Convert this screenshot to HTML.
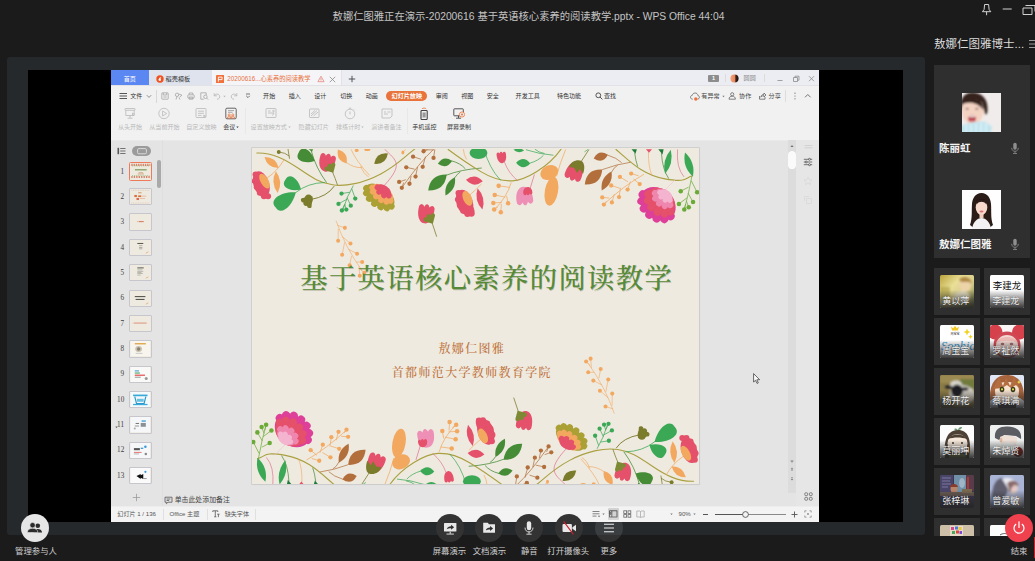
<!DOCTYPE html>
<html lang="zh-CN">
<head>
<meta charset="utf-8">
<title>会议演示</title>
<style>
*{box-sizing:border-box;margin:0;padding:0}
html,body{width:1035px;height:561px;overflow:hidden;background:#1b1b1b}
body{position:relative;font-family:"Liberation Sans","Noto Sans CJK SC",sans-serif;color:#ccc;font-size:12px}
.abs{position:absolute}
#title{position:absolute;left:0;top:9px;width:1057px;text-align:center;font-size:10.3px;line-height:16px;color:#c4c4c4;white-space:nowrap}
#panel{position:absolute;left:7px;top:57px;width:918px;height:478.300px;background:#25292c;border-radius:3px}
#black{position:absolute;left:28px;top:70px;width:875px;height:452px;background:#000}
#wps{position:absolute;left:111.300px;top:70.200px;width:708.200px;height:452px;background:#e4e4e4;overflow:hidden;color:#333}
#wps .t{position:absolute;white-space:nowrap;font-size:7px;line-height:10px;color:#3a3a3a}
#tabbar{position:absolute;left:0;top:0;width:709px;height:16px;background:#ececf1}
#menubar{position:absolute;left:0;top:16px;width:709px;height:19px;background:#f1f1f1;border-top:1px solid #dcdcdc}
#ribbon{position:absolute;left:0;top:35px;width:709px;height:35px;background:#f1f1f1}
#thumbs{position:absolute;left:0;top:70px;width:51px;height:367px;background:#e4e4e4;border-right:1px solid #dedede}
#status{position:absolute;left:0;top:437px;width:709px;height:15px;background:#f3f3f3}
#slide{position:absolute;left:140.300px;top:78.200px;width:447px;height:336px;background:#eeeae0;box-shadow:0 0 0 .8px #cbcbcb,1.200px 1.200px 1.500px rgba(0,0,0,.2);overflow:hidden}
.stitle{position:absolute;left:48.600px;top:112.300px;font-family:"Liberation Serif","Noto Serif CJK SC",serif;font-weight:500;font-size:27.400px;line-height:36px;letter-spacing:1.300px;color:#568a36;white-space:nowrap;text-shadow:.5px .5px .6px rgba(60,70,40,.3)}
.ssub{position:absolute;left:0;width:440.500px;text-align:center;font-family:"Liberation Serif","Noto Serif CJK SC",serif;font-weight:500;font-size:12px;line-height:16px;letter-spacing:1.350px;color:#bf733c;white-space:nowrap}
#side{position:absolute;left:934px;top:65.300px;width:101px;height:470.300px;overflow:hidden}
.bigcard{position:absolute;left:0;top:0;width:96px;height:193px;background:#2f2f2f}
.bigcard .bav{position:absolute;left:28px;margin-top:-1px;width:39px;height:39px;overflow:hidden;background:#fff}
.bigcard .bnm{position:absolute;left:5px;font-size:10.500px;line-height:14px;font-weight:bold;color:#f4f4f4;white-space:nowrap}
.bigcard .mic{position:absolute;left:76px;width:10px;height:13px}
.card{position:absolute;width:46px;height:46.400px;background:#2f2f2f}
.card .av{position:absolute;left:6.300px;top:6.800px;width:33.400px;height:32.800px;border-radius:1.500px;overflow:hidden;background:#3a3a3a}
.card .av svg{position:absolute;left:0;top:0}
.card .nm{position:absolute;left:-1.200px;bottom:.5px;width:100%;height:17px;padding-top:5px;text-align:center;font-size:9.100px;line-height:12px;color:#f2f2f2;white-space:nowrap;text-shadow:0 0 1px rgba(0,0,0,.6)}
.card .sh{position:absolute;left:0;bottom:0;width:100%;height:18px;background:linear-gradient(rgba(40,40,40,0),rgba(40,40,40,.5) 50%,rgba(36,36,36,.9))}
.btn{position:absolute;top:514.300px;width:28px;height:28px;border-radius:50%;background:#333}
.btn svg{position:absolute;left:0;top:0}
.lbl{position:absolute;top:545px;width:60px;font-size:8.4px;line-height:12px;color:#cfcfcf;white-space:nowrap;text-align:center}
</style>
</head>
<body>
<div id="title">敖娜仁图雅正在演示-20200616 基于英语核心素养的阅读教学.pptx - WPS Office 44:04</div>
<div id="panel"></div>
<div id="black"></div>
<div id="wps">
<div class="abs" style="left:0px;top:0px;width:709px;height:15.6px;background:#ecedf2;"></div>
<div class="abs" style="left:0px;top:0px;width:38px;height:15.6px;background:#5b87f2;"></div>
<div class="t" style="left:12.4px;top:3.7px;font-size:6.1px;color:#fff;">首页</div>
<div class="abs" style="left:38px;top:0px;width:62.3px;height:15.6px;background:#dfe3ee;"></div>
<svg class="abs" style="left:44.8px;top:4.9px" width="8" height="8" viewBox="0 0 8 8"><circle cx="4" cy="4" r="3.700" fill="#f2501e"/><path d="M2.500 4.800c.2-1.800 1.600-2.600 3-2.800-.9.800-1.200 1.500-.6 2.500.4.700-.2 1.500-1 1.500-.8 0-1.500-.5-1.400-1.200z" fill="#fff"/></svg>
<div class="t" style="left:54.3px;top:3.7px;font-size:6.15px;color:#333;">稻壳模板</div>
<div class="abs" style="left:100.3px;top:0px;width:129px;height:15.6px;background:#f5f5f8;"></div>
<div class="abs" style="left:229.3px;top:0px;width:0.6px;height:15.6px;background:#e2e2e8;"></div>
<svg class="abs" style="left:104.5px;top:4.5px" width="8.5" height="8.5" viewBox="0 0 8.5 8.5"><rect width="8.500" height="8.500" rx="1" fill="#f2703c"/><path d="M2.400 6.700v-4.600h3.700v2.500h-3.700" fill="none" stroke="#fff" stroke-width=".9"/></svg>
<div class="t" style="left:116px;top:3.7px;font-size:6.28px;color:#e8703a;">20200616...心素养的阅读教学</div>
<svg class="abs" style="left:206px;top:5.2px" width="8" height="8" viewBox="0 0 8 8"><path d="M4 1.200l3.100 5.500h-6.200z" fill="none" stroke="#e47a6c" stroke-width=".7" stroke-linejoin="round"/><path d="M4 3.100v2M4 5.600v.5" stroke="#e47a6c" stroke-width=".7"/></svg>
<svg class="abs" style="left:217.5px;top:5.5px" width="7" height="7" viewBox="0 0 7 7"><path d="M.8.800l5.400 5.400M6.200.8l-5.400 5.400" stroke="#8a8a8a" stroke-width=".8"/></svg>
<svg class="abs" style="left:237px;top:5px" width="8" height="8" viewBox="0 0 8 8"><path d="M4 .8v6.400M.8 4h6.400" stroke="#444" stroke-width=".9"/></svg>
<div class="abs" style="left:597px;top:4.5px;width:10.5px;height:7.4px;background:#8d8d8d;border-radius:1px"></div>
<div class="t" style="left:600.6px;top:3.2px;font-size:5.5px;color:#fff;font-weight:bold">1</div>
<div class="abs" style="left:613.7px;top:4px;width:0.7px;height:8px;background:#dcdce0;"></div>
<svg class="abs" style="left:618.3px;top:3.4px" width="9" height="9" viewBox="0 0 9 9"><defs><linearGradient id="ua" x1="0" y1="0" x2="1" y2="0"><stop offset="0" stop-color="#f2a27c"/><stop offset=".5" stop-color="#e8895e"/><stop offset=".68" stop-color="#3a2019"/><stop offset="1" stop-color="#1c1210"/></linearGradient></defs><circle cx="4.500" cy="4.500" r="4.100" fill="url(#ua)"/></svg>
<div class="t" style="left:632.3px;top:3px;font-size:6.1px;color:#8a8a8a;">圆圆</div>
<div class="abs" style="left:652.3px;top:4px;width:0.7px;height:8px;background:#dcdce0;"></div>
<svg class="abs" style="left:664px;top:3.5px" width="50" height="10" viewBox="0 0 50 10"><g fill="none" stroke="#8a8a8a" stroke-width=".8"><path d="M2.500 6.500h5"/><path d="M18.500 3.500h4v4h-4zM20 3.500v-1.300h4v4h-1.500"/><path d="M34 2.200l5 5M39 2.200l-5 5"/></g></svg>
<div class="abs" style="left:0px;top:15.6px;width:709px;height:54.4px;background:#f1f1f1;"></div>
<div class="abs" style="left:0px;top:15.3px;width:709px;height:0.7px;background:#e2e2e6;"></div>
<svg class="abs" style="left:8px;top:22px" width="9" height="8" viewBox="0 0 9 8"><g fill="#444"><rect x=".5" y="1" width="7.500" height=".9"/><rect x=".5" y="3.550" width="7.500" height=".9"/><rect x=".5" y="6.100" width="7.500" height=".9"/></g></svg>
<div class="t" style="left:19px;top:21px;font-size:6px;color:#333;">文件</div>
<svg class="abs" style="left:35px;top:23.5px" width="6" height="5" viewBox="0 0 6 5"><path d="M.8 1.200l2.200 2.200 2.200-2.200" fill="none" stroke="#777" stroke-width=".8"/></svg>
<div class="abs" style="left:44.7px;top:19.5px;width:0.8px;height:13px;background:#d8d8d8;"></div>
<svg class="abs" style="left:49.5px;top:22px" width="8" height="8" viewBox="0 0 8 8"><g fill="none" stroke="#a4a4a4" stroke-width=".8"><rect x=".8" y=".8" width="6.400" height="6.400" rx=".6"/><path d="M2.300 1v2h3.400v-2M2.300 5h3.400"/></g></svg>
<svg class="abs" style="left:62.5px;top:22px" width="9" height="8" viewBox="0 0 9 8"><g fill="none" stroke="#a4a4a4" stroke-width=".8"><circle cx="3" cy="2.800" r="1.700"/><path d="M4.500 2l3.500 1.200-2.500 2M3 4.500l-1 3M5 5.500l1 2"/></g></svg>
<svg class="abs" style="left:76px;top:22px" width="8" height="8" viewBox="0 0 8 8"><g fill="none" stroke="#a4a4a4" stroke-width=".8"><rect x=".8" y="2.800" width="6.400" height="3.400" rx=".8"/><path d="M2.200 2.800v-1.800h3.600v1.800M2.200 5h3.600v2.200h-3.600z"/></g></svg>
<svg class="abs" style="left:89px;top:22px" width="9" height="8" viewBox="0 0 9 8"><g fill="none" stroke="#a4a4a4" stroke-width=".8"><path d="M6.200 3v-2.200h-5.400v6.400h3"/><circle cx="5.400" cy="4.800" r="1.700"/><path d="M6.600 6l1.600 1.600"/></g></svg>
<svg class="abs" style="left:102px;top:22px" width="8" height="8" viewBox="0 0 8 8"><g fill="none" stroke="#b5b5b5" stroke-width=".8"><path d="M1.200 1.200v2.600h2.600"/><path d="M1.500 3.600c1-1.800 3.800-2.200 5 0 .9 1.800-.5 3.600-2.500 3.600"/></g></svg>
<svg class="abs" style="left:111.5px;top:25px" width="3" height="3" viewBox="0 0 3 3"><path d="M.3.800h2.400l-1.200 1.400z" fill="#b5b5b5"/></svg>
<svg class="abs" style="left:119px;top:22px" width="8" height="8" viewBox="0 0 8 8"><g fill="none" stroke="#b5b5b5" stroke-width=".8"><path d="M6.800 1.200v2.600h-2.600"/><path d="M6.500 3.600c-1-1.800-3.800-2.200-5 0-.9 1.800.5 3.600 2.500 3.600"/></g></svg>
<svg class="abs" style="left:134px;top:23px" width="6" height="6" viewBox="0 0 6 6"><path d="M1 1h4M1.200 2.800l1.800 1.800 1.800-1.800" fill="none" stroke="#555" stroke-width=".8"/></svg>
<div class="t" style="left:151.8px;top:21px;font-size:6.05px;color:#333;">开始</div>
<div class="t" style="left:177.4px;top:21px;font-size:6.05px;color:#333;">插入</div>
<div class="t" style="left:203px;top:21px;font-size:6.05px;color:#333;">设计</div>
<div class="t" style="left:229px;top:21px;font-size:6.05px;color:#333;">切换</div>
<div class="t" style="left:254.5px;top:21px;font-size:6.05px;color:#333;">动画</div>
<div class="t" style="left:324.4px;top:21px;font-size:6.05px;color:#333;">审阅</div>
<div class="t" style="left:350px;top:21px;font-size:6.05px;color:#333;">视图</div>
<div class="t" style="left:375.4px;top:21px;font-size:6.05px;color:#333;">安全</div>
<div class="t" style="left:404.3px;top:21px;font-size:6.05px;color:#333;">开发工具</div>
<div class="t" style="left:445.6px;top:21px;font-size:6.05px;color:#333;">特色功能</div>
<div class="abs" style="left:274.9px;top:20.9px;width:41px;height:10px;background:#e8743b;border-radius:5px"></div>
<div class="t" style="left:280.3px;top:21px;font-size:6.1px;color:#fff;font-weight:bold">幻灯片放映</div>
<svg class="abs" style="left:483.5px;top:22px" width="8" height="8" viewBox="0 0 8 8"><g fill="none" stroke="#444" stroke-width=".9"><circle cx="3.300" cy="3.300" r="2.400"/><path d="M5 5l2.400 2.400"/></g></svg>
<div class="t" style="left:492.7px;top:21px;font-size:6.05px;color:#333;">查找</div>
<svg class="abs" style="left:578.5px;top:21.5px" width="10" height="9" viewBox="0 0 10 9"><path d="M2.700 7.200c-1.300 0-2.200-.9-2.200-2 0-1 .8-1.800 1.800-1.900.3-1.400 1.400-2.300 2.800-2.300 1.500 0 2.700 1.100 2.800 2.500.9.200 1.500.9 1.500 1.800 0 1-.8 1.900-1.900 1.900" fill="none" stroke="#666" stroke-width=".8"/><circle cx="5.800" cy="7" r="1.700" fill="#f0703a"/></svg>
<div class="t" style="left:590px;top:21px;font-size:6.1px;color:#444;">有异常</div>
<svg class="abs" style="left:610.5px;top:25px" width="3" height="3" viewBox="0 0 3 3"><path d="M.3.800h2.400l-1.200 1.400z" fill="#777"/></svg>
<svg class="abs" style="left:616.5px;top:22px" width="9" height="8" viewBox="0 0 9 8"><g fill="none" stroke="#666" stroke-width=".8"><circle cx="4.200" cy="2.300" r="1.600"/><path d="M1 7.200c0-2 1.400-3 3.200-3s3.200 1 3.200 3z"/></g></svg>
<div class="t" style="left:627.8px;top:21px;font-size:6.1px;color:#444;">协作</div>
<svg class="abs" style="left:646px;top:22px" width="9" height="8" viewBox="0 0 9 8"><g fill="none" stroke="#666" stroke-width=".8"><path d="M2.500 4v3.200h5.500v-2.200"/><path d="M3.800 5.200c.3-1.800 1.500-2.800 3.200-2.900v-1.300l2 2-2 2v-1.300c-1.400 0-2.400.4-3.200 1.500z"/></g></svg>
<div class="t" style="left:657.3px;top:21px;font-size:6.1px;color:#444;">分享</div>
<div class="abs" style="left:674px;top:20px;width:0.8px;height:12px;background:#dcdcdc;"></div>
<svg class="abs" style="left:681.5px;top:22px" width="4" height="8" viewBox="0 0 4 8"><g fill="#666"><circle cx="2" cy="1.200" r=".6"/><circle cx="2" cy="4" r=".6"/><circle cx="2" cy="6.800" r=".6"/></g></svg>
<svg class="abs" style="left:693px;top:23px" width="8" height="6" viewBox="0 0 8 6"><path d="M1 4.300l2.800-2.800 2.800 2.800" fill="none" stroke="#666" stroke-width=".9"/></svg>
<svg class="abs" style="left:12.8px;top:37px" width="12" height="13" viewBox="0 0 12 13"><g fill="none" stroke="#b9b9b9" stroke-width=".8"><rect x="1" y="1.500" width="10" height="1.800" rx=".4"/><path d="M1.800 3.300v5.200h8.400v-5.200M6 8.500v2.500M3.500 11.200h5"/><path d="M8.500 6l2 1.300-2 1.300z" fill="#f1f1f1"/></g></svg>
<div class="t" style="left:6.7px;top:52px;font-size:6.05px;color:#b9b9b9;">从头开始</div>
<svg class="abs" style="left:46.5px;top:37px" width="12" height="13" viewBox="0 0 12 13"><g fill="none" stroke="#b9b9b9" stroke-width=".8"><circle cx="6" cy="6.500" r="5.200"/><path d="M4.600 4l4 2.500-4 2.500z"/></g></svg>
<div class="t" style="left:38px;top:52px;font-size:6.05px;color:#b9b9b9;">从当前开始</div>
<svg class="abs" style="left:84px;top:37px" width="12" height="13" viewBox="0 0 12 13"><g fill="none" stroke="#b9b9b9" stroke-width=".8"><rect x="1" y="1.500" width="10" height="9" rx=".6"/><path d="M3 4.200h6M3 6.300h6M3 8.400h3.500"/><path d="M8.800 8l1.800 1.200-1.800 1.200z"/></g></svg>
<div class="t" style="left:75px;top:52px;font-size:6.05px;color:#b9b9b9;">自定义放映</div>
<svg class="abs" style="left:114px;top:37px" width="12" height="13" viewBox="0 0 12 13"><rect x=".8" y="1.200" width="10.400" height="10.600" rx="1.200" fill="none" stroke="#555" stroke-width=".9"/><path d="M3 3.600h6M3 5.300h4.500" stroke="#888" stroke-width=".7"/><g fill="none" stroke="#e8743b" stroke-width=".75"><circle cx="4.200" cy="8" r="1.100"/><circle cx="7.800" cy="8" r="1.100"/><path d="M2.400 11c0-1.300.8-1.900 1.800-1.900s1.800.6 1.800 1.900zM6 11c0-1.300.8-1.900 1.800-1.900s1.800.6 1.800 1.900z"/></g></svg>
<div class="t" style="left:112px;top:52px;font-size:6.05px;color:#3c3c3c;">会议</div>
<svg class="abs" style="left:124.9px;top:56px" width="3" height="3" viewBox="0 0 3 3"><path d="M.3.600h2.400l-1.200 1.400z" fill="#3c3c3c"/></svg>
<div class="abs" style="left:133.3px;top:38px;width:0.8px;height:26px;background:#e8e8e8;"></div>
<svg class="abs" style="left:153.8px;top:37px" width="12" height="13" viewBox="0 0 12 13"><g fill="none" stroke="#b9b9b9" stroke-width=".8"><rect x="1" y="1.500" width="10" height="9" rx=".6"/><path d="M3 4h2.500M3 6h6l-1.500 2.500"/><circle cx="8.500" cy="4" r=".8"/></g></svg>
<div class="t" style="left:139.3px;top:52px;font-size:6.05px;color:#b9b9b9;">设置放映方式</div>
<svg class="abs" style="left:176.4px;top:56px" width="3" height="3" viewBox="0 0 3 3"><path d="M.3.600h2.400l-1.200 1.400z" fill="#b9b9b9"/></svg>
<svg class="abs" style="left:196.5px;top:37px" width="12" height="13" viewBox="0 0 12 13"><g fill="none" stroke="#b9b9b9" stroke-width=".8"><rect x="1.500" y="2" width="9.500" height="8.500" rx=".6"/><path d="M3 9l6-5.500M3 7l4-3.500M5.500 9l4.500-4"/></g></svg>
<div class="t" style="left:187.3px;top:52px;font-size:6.05px;color:#b9b9b9;">隐藏幻灯片</div>
<svg class="abs" style="left:233px;top:37px" width="12" height="13" viewBox="0 0 12 13"><g fill="none" stroke="#b9b9b9" stroke-width=".8"><circle cx="6" cy="7" r="4.800"/><path d="M6 4.500v2.800M4.800 1.200h2.400M9.800 2.500l.8.800"/></g></svg>
<div class="t" style="left:224.8px;top:52px;font-size:6.05px;color:#b9b9b9;">排练计时</div>
<svg class="abs" style="left:249.8px;top:56px" width="3" height="3" viewBox="0 0 3 3"><path d="M.3.600h2.400l-1.200 1.400z" fill="#b9b9b9"/></svg>
<svg class="abs" style="left:269.4px;top:37px" width="12" height="13" viewBox="0 0 12 13"><g fill="none" stroke="#b9b9b9" stroke-width=".8"><path d="M1 2h10v7l-2 2h-8z"/><path d="M3 5h2M6.500 5h3M3 7h4"/></g></svg>
<div class="t" style="left:260px;top:52px;font-size:6.05px;color:#b9b9b9;">演讲者备注</div>
<div class="abs" style="left:295.3px;top:38px;width:0.8px;height:26px;background:#e8e8e8;"></div>
<svg class="abs" style="left:307px;top:37px" width="12" height="13" viewBox="0 0 12 13"><rect x="3" y="3.500" width="6.200" height="9" rx=".8" fill="none" stroke="#444" stroke-width="1.100"/><rect x="4.500" y="5.500" width="3.200" height="5" fill="#999"/><path d="M4 1.800c1.300-1 2.900-1 4.200 0" fill="none" stroke="#e8743b" stroke-width=".8"/></svg>
<div class="t" style="left:301px;top:52px;font-size:6.05px;color:#3c3c3c;">手机遥控</div>
<svg class="abs" style="left:341.7px;top:37px" width="12" height="13" viewBox="0 0 12 13"><rect x=".8" y="1.800" width="9.500" height="7" rx=".6" fill="none" stroke="#444" stroke-width=".9"/><path d="M5.500 8.800v2.200M3 11.200h5" stroke="#444" stroke-width=".9"/><circle cx="9" cy="7.500" r="2.600" fill="#f1f1f1" stroke="#e8743b" stroke-width=".8"/><circle cx="9" cy="7.500" r="1" fill="#e8743b"/></svg>
<div class="t" style="left:335.7px;top:52px;font-size:6.05px;color:#3c3c3c;">屏幕录制</div>
<div class="abs" style="left:0px;top:70px;width:709px;height:367px;background:#e4e4e4;"></div>
<div class="abs" style="left:0px;top:69.5px;width:709px;height:0.8px;background:#e9e9e9;"></div>
<div class="abs" style="left:50.5px;top:70px;width:0.6px;height:367px;background:#dfdfdf;"></div>
<svg class="abs" style="left:5.3px;top:77.3px" width="9" height="8" viewBox="0 0 9 8"><g fill="#555"><rect x=".5" y=".8" width="1.600" height="6.400"/><rect x="3.200" y="1" width="5.300" height=".8"/><rect x="3.200" y="3.600" width="5.300" height=".8"/><rect x="3.200" y="6.200" width="5.300" height=".8"/></g></svg>
<div class="abs" style="left:21px;top:76px;width:19px;height:10px;background:#9b9b9b;border-radius:5px"></div>
<svg class="abs" style="left:25.5px;top:77.5px" width="10" height="7" viewBox="0 0 10 7"><rect x=".6" y=".6" width="8.800" height="5.200" rx="1.200" fill="none" stroke="#e0e0e0" stroke-width=".9"/></svg>
<div class="abs" style="left:45.3px;top:90px;width:4px;height:28px;background:#a9a9a9;border-radius:2px"></div>
<div class="t" style="left:9.3px;top:96.4px;font-size:7.2px;color:#3c3c3c;font-family:'Liberation Serif',serif">1</div>
<svg class="abs" style="left:17.500px;top:92.1px;background:#eeeae0;border:1.1px solid #ee7a5a;border-radius:1.500px" width="23.600" height="18.300" viewBox="0 0 23 18"><g><path d="M1 2h21" stroke="#d9826a" stroke-width="2.400" stroke-dasharray="1.500 1"/><path d="M1 15.500h21" stroke="#d9826a" stroke-width="2.400" stroke-dasharray="1.500 1.200"/><path d="M2 3.200h19" stroke="#8fb06a" stroke-width="1" stroke-dasharray="1 1.500"/><path d="M2 14h19" stroke="#8fb06a" stroke-width="1" stroke-dasharray="1 1.300"/><rect x="5" y="6.800" width="13" height="1.400" fill="#7f9f5e"/><rect x="9" y="10.500" width="5" height=".7" fill="#c98a5a"/><rect x="8" y="11.800" width="7" height=".7" fill="#c98a5a"/></g></svg>
<div class="t" style="left:9.3px;top:121.75px;font-size:7.2px;color:#3c3c3c;font-family:'Liberation Serif',serif">2</div>
<svg class="abs" style="left:18px;top:117.95px;background:#eeeae0;border:0.7px solid #c6c6cc;border-radius:1px" width="22.600" height="17.300" viewBox="0 0 23 18"><g><path d="M1 1.500h21M1 16.500h21" stroke="#e0b8a8" stroke-width=".8" stroke-dasharray="1 1"/><rect x="9" y="4" width="4" height="1" fill="#c98a5a"/><rect x="4.500" y="7" width="3" height="2.500" fill="#d9703a"/><rect x="9" y="7.500" width="3.500" height="2" fill="#d9703a"/><rect x="7" y="10.500" width="3" height="2.500" fill="#e06a4a"/><rect x="12.500" y="8" width="6" height=".7" fill="#e0a080"/><rect x="11" y="11" width="6" height=".7" fill="#e0a080"/></g></svg>
<div class="t" style="left:9.3px;top:147.1px;font-size:7.2px;color:#3c3c3c;font-family:'Liberation Serif',serif">3</div>
<svg class="abs" style="left:18px;top:143.3px;background:#eeeae0;border:0.7px solid #c6c6cc;border-radius:1px" width="22.600" height="17.300" viewBox="0 0 23 18"><g><rect x="9.500" y="8.200" width="6" height="1.400" fill="#d9826a"/><rect x="7.500" y="8.600" width="1.200" height=".6" fill="#d9826a"/></g></svg>
<div class="t" style="left:9.3px;top:172.45px;font-size:7.2px;color:#3c3c3c;font-family:'Liberation Serif',serif">4</div>
<svg class="abs" style="left:18px;top:168.65px;background:#eeeae0;border:0.7px solid #c6c6cc;border-radius:1px" width="22.600" height="17.300" viewBox="0 0 23 18"><g><rect x="8" y="3.500" width="7" height="1.200" fill="#5a5a50"/><rect x="10" y="6.500" width="4" height=".7" fill="#8a8a80"/><rect x="10" y="8.300" width="4" height=".7" fill="#8a8a80"/><rect x="10" y="10.100" width="4" height=".7" fill="#8a8a80"/><path d="M18 15.500l3-1.500" stroke="#e0a060" stroke-width=".8"/></g></svg>
<div class="t" style="left:9.3px;top:197.8px;font-size:7.2px;color:#3c3c3c;font-family:'Liberation Serif',serif">5</div>
<svg class="abs" style="left:18px;top:194px;background:#eeeae0;border:0.7px solid #c6c6cc;border-radius:1px" width="22.600" height="17.300" viewBox="0 0 23 18"><g><rect x="8" y="2.800" width="7.500" height="1.200" fill="#5a5a50"/><rect x="8" y="5.500" width="6" height=".6" fill="#8a8a80"/><rect x="8" y="7" width="7" height=".6" fill="#8a8a80"/><rect x="8" y="8.500" width="5" height=".6" fill="#8a8a80"/><rect x="8" y="10" width="6.500" height=".6" fill="#8a8a80"/><rect x="8" y="11.500" width="4" height=".6" fill="#8a8a80"/><path d="M18 15.500l3-1.500" stroke="#e0a060" stroke-width=".8"/></g></svg>
<div class="t" style="left:9.3px;top:223.15px;font-size:7.2px;color:#3c3c3c;font-family:'Liberation Serif',serif">6</div>
<svg class="abs" style="left:18px;top:219.35px;background:#eeeae0;border:0.7px solid #c6c6cc;border-radius:1px" width="22.600" height="17.300" viewBox="0 0 23 18"><g><rect x="5" y="6" width="12.500" height="1.200" fill="#4a4a44"/><rect x="6" y="9.300" width="10.500" height="1.200" fill="#4a4a44"/><path d="M18 15.500l3-1.500" stroke="#e0a060" stroke-width=".8"/></g></svg>
<div class="t" style="left:9.3px;top:248.5px;font-size:7.2px;color:#3c3c3c;font-family:'Liberation Serif',serif">7</div>
<svg class="abs" style="left:18px;top:244.7px;background:#eeeae0;border:0.7px solid #c6c6cc;border-radius:1px" width="22.600" height="17.300" viewBox="0 0 23 18"><g><rect x="4" y="7.800" width="15" height="1" fill="#d9826a"/><rect x="2.500" y="8" width="1" height=".6" fill="#d9826a"/></g></svg>
<div class="t" style="left:9.3px;top:273.85px;font-size:7.2px;color:#3c3c3c;font-family:'Liberation Serif',serif">8</div>
<svg class="abs" style="left:18px;top:270.05px;background:#eeeae0;border:0.7px solid #c6c6cc;border-radius:1px" width="22.600" height="17.300" viewBox="0 0 23 18"><g><rect x="0" y="0" width="23" height="18" fill="#f7f5ee"/><rect x="5" y="2.500" width="13" height="1.500" fill="#e0a040"/><ellipse cx="9.500" cy="9.500" rx="4" ry="3.500" fill="#c9c2b0"/><ellipse cx="9.500" cy="9.500" rx="2" ry="2" fill="#8a8270"/><rect x="6" y="14" width="8" height=".7" fill="#aaa"/></g></svg>
<div class="t" style="left:9.3px;top:299.2px;font-size:7.2px;color:#3c3c3c;font-family:'Liberation Serif',serif">9</div>
<svg class="abs" style="left:18px;top:295.4px;background:#eeeae0;border:0.7px solid #c6c6cc;border-radius:1px" width="22.600" height="17.300" viewBox="0 0 23 18"><g><rect x="0" y="0" width="23" height="18" fill="#f9f9f7"/><rect x="5" y="4" width="5" height="1.200" fill="#3a9ad0"/><rect x="5" y="6.500" width="6" height="1.200" fill="#3aa060"/><rect x="5" y="9" width="12" height="1.300" fill="#e04040"/><rect x="5" y="11.500" width="7" height="1" fill="#888"/><circle cx="18.500" cy="13.500" r="1.800" fill="#999"/></g></svg>
<div class="t" style="left:5.8px;top:324.55px;font-size:7.2px;color:#3c3c3c;font-family:'Liberation Serif',serif">10</div>
<svg class="abs" style="left:18px;top:320.75px;background:#eeeae0;border:0.7px solid #c6c6cc;border-radius:1px" width="22.600" height="17.300" viewBox="0 0 23 18"><g><rect x="0" y="0" width="23" height="18" fill="#f4fafc"/><rect x="3" y="3" width="17" height="2" fill="#3aa8d8"/><path d="M5 5.500l2 8h9l2-8" fill="none" stroke="#2a98c8" stroke-width="1.400"/><rect x="7.500" y="8" width="8" height="3.500" fill="#6ac0e0"/><rect x="3" y="14" width="17" height="1.500" fill="#3aa8d8"/></g></svg>
<div class="t" style="left:5.8px;top:349.9px;font-size:7.2px;color:#3c3c3c;font-family:'Liberation Serif',serif">11</div>
<svg class="abs" style="left:18px;top:346.1px;background:#eeeae0;border:0.7px solid #c6c6cc;border-radius:1px" width="22.600" height="17.300" viewBox="0 0 23 18"><g><rect x="0" y="0" width="23" height="18" fill="#f6f7f8"/><rect x="13" y="4" width="5" height="1.500" fill="#3a9ad8"/><rect x="6" y="7" width="4" height="1.200" fill="#777"/><rect x="12" y="7" width="6" height="4.500" fill="#8a9098"/><rect x="5" y="10" width="5" height="1.200" fill="#999"/><circle cx="5" cy="13.500" r="1.200" fill="#aaa"/></g></svg>
<div class="t" style="left:5.8px;top:375.25px;font-size:7.2px;color:#3c3c3c;font-family:'Liberation Serif',serif">12</div>
<svg class="abs" style="left:18px;top:371.45px;background:#eeeae0;border:0.7px solid #c6c6cc;border-radius:1px" width="22.600" height="17.300" viewBox="0 0 23 18"><g><rect x="0" y="0" width="23" height="18" fill="#f6f7f8"/><rect x="4" y="6" width="7" height="2.500" fill="#555"/><rect x="12" y="5.500" width="3" height="1.500" fill="#3a9ad8"/><circle cx="17.500" cy="4.500" r="1.500" fill="#3a9ad8"/><rect x="4" y="10.500" width="9" height="1" fill="#e06060"/><rect x="4" y="12.500" width="6" height=".8" fill="#999"/><circle cx="18" cy="13" r="1.500" fill="#888"/></g></svg>
<div class="t" style="left:5.8px;top:400.6px;font-size:7.2px;color:#3c3c3c;font-family:'Liberation Serif',serif">13</div>
<svg class="abs" style="left:18px;top:396.8px;background:#eeeae0;border:0.7px solid #c6c6cc;border-radius:1px" width="22.600" height="17.300" viewBox="0 0 23 18"><g><rect x="0" y="0" width="23" height="18" fill="#fafafa"/><path d="M7 9.500l5-2.500v1.500l3-1.500v6l-3-1.500v1.500z" fill="#111"/><circle cx="17.500" cy="4.500" r="1.300" fill="#3a9ad8"/><rect x="15" y="12" width="4" height="1" fill="#888"/></g></svg>
<svg class="abs" style="left:3.3px;top:355.5px" width="3" height="3" viewBox="0 0 3 3"><path d="M.3.600h2.400l-1.200 1.600z" fill="#666"/></svg>
<svg class="abs" style="left:21px;top:423px" width="9" height="9" viewBox="0 0 9 9"><path d="M4.500 .8v7.400M.8 4.500h7.400" stroke="#9a9a9a" stroke-width=".8"/></svg>
<svg class="abs" style="left:52.5px;top:425.5px" width="9" height="9" viewBox="0 0 9 9"><g fill="none" stroke="#555" stroke-width=".8"><path d="M1 1.200h7v5h-4l-1.600 1.500v-1.500h-1.400z"/><path d="M2.600 3h3.800M2.600 4.500h2.500"/></g></svg>
<div class="t" style="left:63.4px;top:425px;font-size:6.9px;color:#444;">单击此处添加备注</div>
<div class="abs" style="left:677px;top:70px;width:7.5px;height:353px;background:#dcdcdc;"></div>
<div class="abs" style="left:685px;top:70px;width:24px;height:367px;background:#e6e6e6;"></div>
<svg class="abs" style="left:678.8px;top:74px" width="4" height="4" viewBox="0 0 4 4"><path d="M.4 3l1.600-2 1.600 2z" fill="#777"/></svg>
<div class="abs" style="left:677.2px;top:81px;width:7.2px;height:18.2px;background:#fafafa;border-radius:3.600px;box-shadow:0 0 .5px #bbb"></div>
<svg class="abs" style="left:678.8px;top:389px" width="4" height="22" viewBox="0 0 4 22"><g fill="#777"><path d="M.6 1.500h2.800v.7h-2.800zM1 2.600h2l-1 1.200z"/><path d="M.8 9.800l1.200-1.300 1.200 1.300zM.8 10.600h2.400l-1.200 1.300z"/><path d="M.8 19.300l1.200-1.300 1.200 1.300zM.8 20.100h2.400l-1.200 1.300z"/></g></svg>
<svg class="abs" style="left:692.5px;top:73.5px" width="9" height="6" viewBox="0 0 9 6"><path d="M.5 1.500h8M.5 3.800h8" stroke="#cfcfcf" stroke-width=".9"/></svg>
<svg class="abs" style="left:692px;top:86.5px" width="10" height="10" viewBox="0 0 10 10"><g fill="none" stroke="#555" stroke-width=".8"><path d="M.8 2.300h8.400M.8 5h8.400M.8 7.700h8.400"/><circle cx="6.500" cy="2.300" r="1" fill="#e8e8e8"/><circle cx="3.200" cy="5" r="1" fill="#e8e8e8"/><circle cx="6.500" cy="7.700" r="1" fill="#e8e8e8"/></g></svg>
<svg class="abs" style="left:692px;top:105.5px" width="10" height="10" viewBox="0 0 10 10"><path d="M5 1l1.200 2.600 2.800.3-2.100 1.900.6 2.800-2.500-1.400-2.500 1.400.6-2.800-2.100-1.900 2.800-.3z" fill="none" stroke="#d8d8d8" stroke-width=".8"/></svg>
<svg class="abs" style="left:692px;top:124.5px" width="10" height="10" viewBox="0 0 10 10"><g fill="none" stroke="#d8d8d8" stroke-width=".8"><path d="M3.500 3.500h5v5h-5z"/><path d="M1.500 6v-4.500h4.500"/></g></svg>
<svg class="abs" style="left:692.5px;top:421.5px" width="9" height="9" viewBox="0 0 9 9"><g fill="none" stroke="#666" stroke-width=".8"><rect x=".8" y=".8" width="2.800" height="2.800" rx=".8"/><rect x="5.400" y=".8" width="2.800" height="2.800" rx=".8"/><rect x=".8" y="5.400" width="2.800" height="2.800" rx=".8"/><rect x="5.400" y="5.400" width="2.800" height="2.800" rx=".8"/></g></svg>
<div class="abs" style="left:0px;top:436px;width:709px;height:16px;background:#f3f3f3;"></div>
<div class="abs" style="left:0px;top:435.7px;width:709px;height:0.8px;background:#ededed;"></div>
<div class="t" style="left:6px;top:439px;font-size:6.1px;color:#555;">幻灯片 1 / 136</div>
<div class="abs" style="left:52px;top:438.5px;width:0.7px;height:11px;background:#e0e0e0;"></div>
<div class="t" style="left:58.3px;top:439px;font-size:6.1px;color:#555;">Office 主题</div>
<div class="abs" style="left:96px;top:438.5px;width:0.7px;height:11px;background:#e0e0e0;"></div>
<svg class="abs" style="left:100.5px;top:440px" width="8" height="8" viewBox="0 0 8 8"><g fill="none" stroke="#555" stroke-width=".8"><path d="M.8 2v-1.200h5v1.200M3.300 .8v6M2.200 6.800h2.200"/><path d="M5.200 4.200h2.400M6.400 4.200v3"/></g></svg>
<div class="t" style="left:113.4px;top:439px;font-size:6.1px;color:#555;">缺失字体</div>
<div class="abs" style="left:144px;top:438.5px;width:0.7px;height:11px;background:#e0e0e0;"></div>
<svg class="abs" style="left:480.5px;top:440px" width="9" height="8" viewBox="0 0 9 8"><g fill="none" stroke="#666" stroke-width=".8"><path d="M.5 1.500h7M.5 3.800h7M.5 6.100h4"/></g><path d="M5.800 5.800h2.400l-1.200 1.500z" fill="#666"/></svg>
<svg class="abs" style="left:490.3px;top:443px" width="3" height="3" viewBox="0 0 3 3"><path d="M.3.600h2.400l-1.200 1.400z" fill="#777"/></svg>
<div class="abs" style="left:496.5px;top:438.2px;width:11.4px;height:11.6px;background:#d2d2d2;border-radius:1px"></div>
<svg class="abs" style="left:498px;top:440px" width="9" height="8" viewBox="0 0 9 8"><g fill="none" stroke="#444" stroke-width=".8"><rect x=".6" y=".8" width="7.400" height="6.200"/><path d="M2.800 .8v6.200"/></g><rect x="1" y="2" width="1.400" height="3" fill="#777"/></svg>
<svg class="abs" style="left:511.5px;top:440px" width="9" height="8" viewBox="0 0 9 8"><g fill="none" stroke="#666" stroke-width=".8"><rect x=".8" y=".8" width="2.800" height="2.600"/><rect x="5" y=".8" width="2.800" height="2.600"/><rect x=".8" y="4.600" width="2.800" height="2.600"/><rect x="5" y="4.600" width="2.800" height="2.600"/></g></svg>
<svg class="abs" style="left:525px;top:440px" width="9" height="8" viewBox="0 0 9 8"><g fill="none" stroke="#aaa" stroke-width=".8"><path d="M.8 1h3.200l.5.500.5-.500h3.200v6h-3.200l-.5.500-.5-.500h-3.200z"/><path d="M4.500 1.500v6"/></g></svg>
<svg class="abs" style="left:558.8px;top:443px" width="3" height="3" viewBox="0 0 3 3"><path d="M.3.600h2.400l-1.200 1.400z" fill="#777"/></svg>
<div class="t" style="left:567.3px;top:439px;font-size:6.1px;color:#555;">90%</div>
<svg class="abs" style="left:582px;top:443px" width="3" height="3" viewBox="0 0 3 3"><path d="M.3.600h2.400l-1.200 1.400z" fill="#777"/></svg>
<div class="abs" style="left:591.5px;top:443.6px;width:5.5px;height:0.9px;background:#555;"></div>
<div class="abs" style="left:603.5px;top:443.7px;width:71px;height:0.7px;background:#8a8a8a;"></div>
<div class="abs" style="left:603.5px;top:443.5px;width:30px;height:1px;background:#555;"></div>
<svg class="abs" style="left:630.8px;top:440.5px" width="7" height="7" viewBox="0 0 7 7"><circle cx="3.500" cy="3.500" r="2.900" fill="#f3f3f3" stroke="#444" stroke-width=".8"/></svg>
<svg class="abs" style="left:679.5px;top:440.5px" width="7" height="7" viewBox="0 0 7 7"><path d="M3.500 .5v6M.5 3.500h6" stroke="#555" stroke-width=".9"/></svg>
<svg class="abs" style="left:693px;top:440px" width="8" height="8" viewBox="0 0 8 8"><g fill="none" stroke="#8a8a8a" stroke-width=".8"><path d="M.8 2.500v-1.700h1.700M5.500 .8h1.700v1.700M7.200 5.500v1.700h-1.700M2.500 7.200h-1.700v-1.700"/></g><circle cx="4" cy="4" r=".9" fill="#8a8a8a"/></svg>
<div id="slide"><svg class="abs" style="left:-.1px;top:.3px" width="448.3" height="336" viewBox="0 0 448.3 336"><defs><g id="flora"><g transform="translate(-3.20 -4.50) scale(0.17832)"><path d="M45 48C130 45 200 80 280 135S400 215 470 226S640 218 740 165S880 62 930 26" fill="none" stroke="#aaa040" stroke-width="6.235" stroke-linecap="round"/><path d="M168 42Q205 45 226 64M220 26L228 78" fill="none" stroke="#7b7b2c" stroke-width="4.35" stroke-linecap="round"/><circle cx="168" cy="42" r="11" fill="#7b7b2c"/><path d="M198 85Q160 150 105 186" fill="none" stroke="#f3a860" stroke-width="4.35" stroke-linecap="round"/><path d="M88.0 70.0Q103.5 132.6 168.0 132.0Q152.5 69.4 88.0 70.0Z" fill="#f3a860"/><path d="M152.0 150.0Q119.1 214.1 162.0 272.0Q194.9 207.9 152.0 150.0Z" fill="#f3a860"/><ellipse cx="70" cy="222" rx="44" ry="74" transform="rotate(-18 70 222)" fill="#e5506a"/><circle cx="38" cy="168" r="17" fill="#e5506a"/><circle cx="34" cy="205" r="17" fill="#e5506a"/><circle cx="45" cy="240" r="17" fill="#e5506a"/><circle cx="62" cy="270" r="17" fill="#e5506a"/><circle cx="85" cy="290" r="17" fill="#e5506a"/><circle cx="108" cy="290" r="17" fill="#e5506a"/><ellipse cx="88" cy="205" rx="22" ry="46" transform="rotate(-30 88 205)" fill="#f3a860"/><path d="M262 270Q330 215 425 213" fill="none" stroke="#3ba856" stroke-width="4.35" stroke-linecap="round"/><path d="M293.0 252.0C277.7 188.1 226.5 153.0 205.0 198.0C174.7 237.6 229.1 267.3 293.0 252.0Z" fill="#3ba856"/><path d="M264.0 268.0C180.7 262.3 110.1 309.8 150.0 352.0C178.5 402.6 244.7 349.3 264.0 268.0Z" fill="#3ba856"/><path d="M350 35Q375 130 435 212" fill="none" stroke="#468c36" stroke-width="4.35" stroke-linecap="round"/><path d="M370.0 92.0C351.0 29.6 298.5 -1.3 280.0 45.0C252.5 86.6 308.0 112.1 370.0 92.0Z" fill="#468c36"/><path d="M335 26h25l-5 14z" fill="#468c36"/><path d="M468 150Q485 190 497 226" fill="none" stroke="#7b7b2c" stroke-width="4.35" stroke-linecap="round"/><g transform="translate(440 92) rotate(14)"><path d="M-44 -25.62A18.3333 29.3333 0 0 1 -14.6667 -25.62A18.3333 40.3333 0 0 1 14.6667 -25.62A18.3333 29.3333 0 0 1 44 -25.62C49.28 21.35 30.8 61 0 61C-30.8 61 -49.28 21.35 -44 -25.62Z" fill="#e5506a"/></g><path d="M474.0 158.0L429.6 146.1A11.9 11.9 0 0 1 441.5 125.5A11.9 11.9 0 0 1 462.1 113.6A11.9 11.9 0 0 1 485.9 113.6Z" fill="#7d8a33"/><path d="M350 308Q440 292 478 235" fill="none" stroke="#7b7b2c" stroke-width="5.22" stroke-linecap="round"/><path d="M357.0 290.0L351.6 351.8A14.8 14.8 0 0 1 326.0 343.7A14.8 14.8 0 0 1 306.2 325.6A14.8 14.8 0 0 1 295.9 300.8Z" fill="#7b7b2c"/><ellipse cx="335" cy="308" rx="24" ry="28" fill="#7b7b2c"/><path d="M585 232Q550 290 527 368" fill="none" stroke="#3ba856" stroke-width="4.06" stroke-linecap="round"/><path d="M565 268L520 275" fill="none" stroke="#3ba856" stroke-width="4.06" stroke-linecap="round"/><circle cx="520" cy="275" r="12.075" fill="#3ba856"/><path d="M578 250L597 303" fill="none" stroke="#3ba856" stroke-width="4.06" stroke-linecap="round"/><circle cx="597" cy="303" r="12.075" fill="#3ba856"/><path d="M548 308L503 333" fill="none" stroke="#3ba856" stroke-width="4.06" stroke-linecap="round"/><circle cx="503" cy="333" r="12.075" fill="#3ba856"/><path d="M552 300L572 343" fill="none" stroke="#3ba856" stroke-width="4.06" stroke-linecap="round"/><circle cx="572" cy="343" r="12.075" fill="#3ba856"/><path d="M535 340L522 370" fill="none" stroke="#3ba856" stroke-width="4.06" stroke-linecap="round"/><circle cx="522" cy="370" r="12.075" fill="#3ba856"/><path d="M538 335L547 365" fill="none" stroke="#3ba856" stroke-width="4.06" stroke-linecap="round"/><circle cx="547" cy="365" r="12.075" fill="#3ba856"/><path d="M500.0 28.0Q488.2 89.0 548.0 106.0Q559.8 45.0 500.0 28.0Z" fill="#f3a860"/><path d="M575 30Q600 90 676 172M545 100Q590 132 632 130" fill="none" stroke="#f3a860" stroke-width="3.77" stroke-linecap="round"/><ellipse cx="605" cy="33" rx="11" ry="9" fill="#f3a860"/><ellipse cx="662" cy="30" rx="14" ry="7" fill="#f3a860"/></g><g transform="translate(108.80 -4.50) scale(0.17832)"><path d="M0 122Q15 165 42 180M232 48Q238 38 250 30" fill="none" stroke="#f3a860" stroke-width="3.77" stroke-linecap="round"/><ellipse cx="38" cy="30" rx="16" ry="7" fill="#f3a860"/><ellipse cx="236" cy="45" rx="8" ry="11" fill="#f3a860"/><path d="M75.0 108.0Q140.6 114.9 152.0 50.0Q86.4 43.1 75.0 108.0Z" fill="#7b7b2c"/><path d="M135 28C200 90 240 110 135 226" fill="none" stroke="#e0708f" stroke-width="4.06" stroke-linecap="round"/><g transform="translate(106 290) rotate(36)" fill="#aaa034"><ellipse cx="0" cy="0" rx="94" ry="55"/><circle cx="86.4" cy="7.6" r="18.3"/><circle cx="71.0" cy="29.9" r="18.3"/><circle cx="39.9" cy="45.5" r="18.3"/><circle cx="0.0" cy="51.2" r="18.3"/><circle cx="-39.9" cy="45.5" r="18.3"/><circle cx="-71.0" cy="29.9" r="18.3"/><circle cx="-86.4" cy="7.6" r="18.3"/></g><g transform="translate(120 273) rotate(36)" fill="#f3a860"><ellipse cx="0" cy="0" rx="70" ry="40"/><circle cx="63.9" cy="7.0" r="15.9"/><circle cx="48.0" cy="25.1" r="15.9"/><circle cx="17.8" cy="35.8" r="15.9"/><circle cx="-17.8" cy="35.8" r="15.9"/><circle cx="-48.0" cy="25.1" r="15.9"/><circle cx="-63.9" cy="7.0" r="15.9"/></g><g transform="translate(130 257) rotate(36)" fill="#e5506a"><ellipse cx="0" cy="0" rx="45" ry="27"/><circle cx="39.6" cy="8.1" r="15.8"/><circle cx="16.9" cy="23.0" r="15.8"/><circle cx="-16.9" cy="23.0" r="15.8"/><circle cx="-39.6" cy="8.1" r="15.8"/></g><path d="M405 30Q330 100 232 240" fill="none" stroke="#b26f3c" stroke-width="4.06" stroke-linecap="round"/><path d="M335 82L293 68" fill="none" stroke="#b26f3c" stroke-width="4.06" stroke-linecap="round"/><circle cx="293" cy="68" r="12.075" fill="#b26f3c"/><path d="M372 30L352 38" fill="none" stroke="#b26f3c" stroke-width="4.06" stroke-linecap="round"/><circle cx="352" cy="38" r="12.075" fill="#b26f3c"/><path d="M415 30L408 75" fill="none" stroke="#b26f3c" stroke-width="4.06" stroke-linecap="round"/><circle cx="408" cy="75" r="12.075" fill="#b26f3c"/><path d="M300 138L255 128" fill="none" stroke="#b26f3c" stroke-width="4.06" stroke-linecap="round"/><circle cx="255" cy="128" r="12.075" fill="#b26f3c"/><path d="M362 70L347 125" fill="none" stroke="#b26f3c" stroke-width="4.06" stroke-linecap="round"/><circle cx="347" cy="125" r="12.075" fill="#b26f3c"/><path d="M318 128L307 180" fill="none" stroke="#b26f3c" stroke-width="4.06" stroke-linecap="round"/><circle cx="307" cy="180" r="12.075" fill="#b26f3c"/><path d="M250 198L215 210" fill="none" stroke="#b26f3c" stroke-width="4.06" stroke-linecap="round"/><circle cx="215" cy="210" r="12.075" fill="#b26f3c"/><path d="M282 178L273 220" fill="none" stroke="#b26f3c" stroke-width="4.06" stroke-linecap="round"/><circle cx="273" cy="220" r="12.075" fill="#b26f3c"/><path d="M240 215L230 243" fill="none" stroke="#b26f3c" stroke-width="4.06" stroke-linecap="round"/><circle cx="230" cy="243" r="12.075" fill="#b26f3c"/><path d="M352 30L410 30" fill="none" stroke="#b26f3c" stroke-width="4.06" stroke-linecap="round"/><path d="M510 92Q560 105 585 135M480 172Q560 140 676 132M528 185Q540 165 556 155" fill="none" stroke="#468c36" stroke-width="4.35" stroke-linecap="round"/><path d="M432.0 108.0Q480.2 141.2 512.0 92.0Q463.8 58.8 432.0 108.0Z" fill="#468c36"/><path d="M378.0 258.0Q470.6 259.9 482.0 168.0Q389.4 166.1 378.0 258.0Z" fill="#468c36"/><path d="M475.0 286.0Q537.0 253.4 528.0 184.0Q466.0 216.6 475.0 286.0Z" fill="#468c36"/><ellipse cx="660" cy="48" rx="50" ry="34" fill="#3ba856"/><path d="M490 28C560 80 620 120 673 152S780 207 850 204S1050 130 1123 26" fill="none" stroke="#aaa040" stroke-width="6.235" stroke-linecap="round"/><path d="M575 28Q578 60 592 82" fill="none" stroke="#f3a860" stroke-width="3.77" stroke-linecap="round"/><path d="M400 440L425 515" fill="none" stroke="#7b7b2c" stroke-width="4.35" stroke-linecap="round"/><g transform="translate(366 378) rotate(10)"><path d="M-44 -27.3A18.3333 29.3333 0 0 1 -14.6667 -27.3A18.3333 40.3333 0 0 1 14.6667 -27.3A18.3333 29.3333 0 0 1 44 -27.3C49.28 22.75 30.8 65 0 65C-30.8 65 -49.28 22.75 -44 -27.3Z" fill="#e5506a"/></g><path d="M404.0 444.0L357.6 431.6A12.4 12.4 0 0 1 370.1 410.1A12.4 12.4 0 0 1 391.6 397.6A12.4 12.4 0 0 1 416.4 397.6Z" fill="#7d8a33"/><path d="M676 222Q640 260 612 282" fill="none" stroke="#f3a860" stroke-width="3.77" stroke-linecap="round"/><path d="M590.0 198.0Q633.1 247.8 684.0 206.0Q640.9 156.2 590.0 198.0Z" fill="#e5506a"/><ellipse cx="582" cy="325" rx="46" ry="74" transform="rotate(-18 582 325)" fill="#e5506a"/><circle cx="548" cy="272" r="17" fill="#e5506a"/><circle cx="545" cy="308" r="17" fill="#e5506a"/><circle cx="556" cy="342" r="17" fill="#e5506a"/><circle cx="574" cy="372" r="17" fill="#e5506a"/><circle cx="598" cy="390" r="17" fill="#e5506a"/><circle cx="620" cy="388" r="17" fill="#e5506a"/><ellipse cx="598" cy="302" rx="24" ry="44" transform="rotate(-25 598 302)" fill="#f3a860"/><path d="M655.0 245.0Q633.4 312.9 682.0 365.0Q703.6 297.1 655.0 245.0Z" fill="#e5506a"/></g><g transform="translate(220.80 -4.50) scale(0.17832)"><path d="M65 30Q90 130 155 200M300 30Q380 56 450 60M320 105Q370 90 395 62M350 28Q370 45 400 50" fill="none" stroke="#3ba856" stroke-width="4.06" stroke-linecap="round"/><path d="M243.0 102.0Q280.2 149.9 322.0 106.0Q284.8 58.1 243.0 102.0Z" fill="#3ba856"/><path d="M228.0 30.0Q256.5 54.0 288.0 34.0Q259.5 10.0 228.0 30.0Z" fill="#3ba856"/><path d="M178 100Q200 160 250 202" fill="none" stroke="#e0708f" stroke-width="3.77" stroke-linecap="round"/><g transform="translate(161 66) rotate(-8)"><path d="M-26 -16.38A10.8333 17.3333 0 0 1 -8.66667 -16.38A10.8333 23.8333 0 0 1 8.66667 -16.38A10.8333 17.3333 0 0 1 26 -16.38C29.12 13.65 18.2 39 0 39C-18.2 39 -29.12 13.65 -26 -16.38Z" fill="#e5506a"/></g><path d="M215 215Q190 300 120 365" fill="none" stroke="#f3a860" stroke-width="4.06" stroke-linecap="round"/><path d="M205 240L145 232" fill="none" stroke="#f3a860" stroke-width="4.06" stroke-linecap="round"/><circle cx="145" cy="232" r="12.65" fill="#f3a860"/><path d="M180 295L123 283" fill="none" stroke="#f3a860" stroke-width="4.06" stroke-linecap="round"/><circle cx="123" cy="283" r="12.65" fill="#f3a860"/><path d="M160 325L115 328" fill="none" stroke="#f3a860" stroke-width="4.06" stroke-linecap="round"/><circle cx="115" cy="328" r="12.65" fill="#f3a860"/><path d="M190 290L198 330" fill="none" stroke="#f3a860" stroke-width="4.06" stroke-linecap="round"/><circle cx="198" cy="330" r="12.65" fill="#f3a860"/><path d="M140 350L120 365" fill="none" stroke="#f3a860" stroke-width="4.06" stroke-linecap="round"/><circle cx="120" cy="365" r="12.65" fill="#f3a860"/><path d="M160 335L157 380" fill="none" stroke="#f3a860" stroke-width="4.06" stroke-linecap="round"/><circle cx="157" cy="380" r="12.65" fill="#f3a860"/><path d="M345 170L322 245" fill="none" stroke="#e0708f" stroke-width="4.06" stroke-linecap="round"/><g transform="translate(290 298) rotate(172)"><path d="M-46 -26.04A19.1667 30.6667 0 0 1 -15.3333 -26.04A19.1667 42.1667 0 0 1 15.3333 -26.04A19.1667 30.6667 0 0 1 46 -26.04C51.52 21.7 32.2 62 0 62C-32.2 62 -51.52 21.7 -46 -26.04Z" fill="#ee8fb5"/></g><g transform="translate(308 265) rotate(172)"><path d="M-25 -10.92A10.4167 16.6667 0 0 1 -8.33333 -10.92A10.4167 22.9167 0 0 1 8.33333 -10.92A10.4167 16.6667 0 0 1 25 -10.92C28 9.1 17.5 26 0 26C-17.5 26 -28 9.1 -25 -10.92Z" fill="#e5506a"/></g><path d="M520 30Q490 100 470 176" fill="none" stroke="#f3a860" stroke-width="4.06" stroke-linecap="round"/><ellipse cx="429" cy="157" rx="52" ry="40" transform="rotate(-25 429 157)" fill="#f3a860"/><ellipse cx="441" cy="262" rx="37" ry="82" transform="rotate(10 441 262)" fill="#f3a860"/><path d="M650 30L610 92" fill="none" stroke="#7b7b2c" stroke-width="4.35" stroke-linecap="round"/><g transform="translate(568 160) rotate(200)"><path d="M-47 -27.72A19.5833 31.3333 0 0 1 -15.6667 -27.72A19.5833 43.0833 0 0 1 15.6667 -27.72A19.5833 31.3333 0 0 1 47 -27.72C52.64 23.1 32.9 66 0 66C-32.9 66 -52.64 23.1 -47 -27.72Z" fill="#e5506a"/></g><path d="M540 128C548 95 585 82 610 92C630 105 628 140 618 165L600 138L585 160L568 130Z" fill="#7b7b2c"/><path d="M0.0 345.0Q-10.9 375.0 6.0 402.0Q16.9 372.0 0.0 345.0Z" fill="#e5506a"/></g><g transform="translate(332.80 -4.50) scale(0.17832)"><path d="M130 60Q180 75 205 100M100 140Q180 110 255 100M150 155Q165 125 182 118" fill="none" stroke="#b26f3c" stroke-width="4.06" stroke-linecap="round"/><path d="M50.0 78.0Q101.2 112.6 130.0 58.0Q78.8 23.4 50.0 78.0Z" fill="#b26f3c"/><path d="M0.0 224.0Q89.3 229.1 98.0 140.0Q8.7 134.9 0.0 224.0Z" fill="#b26f3c"/><path d="M95.0 258.0Q159.8 224.3 150.0 152.0Q85.2 185.7 95.0 258.0Z" fill="#b26f3c"/><path d="M175 28C250 90 320 170 450 193S560 185 605 175" fill="none" stroke="#aaa040" stroke-width="6.235" stroke-linecap="round"/><path d="M0 40L18 28" fill="none" stroke="#3ba856" stroke-width="3.77" stroke-linecap="round"/><path d="M330 168Q220 230 105 337" fill="none" stroke="#f3a860" stroke-width="4.06" stroke-linecap="round"/><path d="M300 175L260 163" fill="none" stroke="#f3a860" stroke-width="4.06" stroke-linecap="round"/><circle cx="260" cy="163" r="12.075" fill="#f3a860"/><path d="M240 208L197 182" fill="none" stroke="#f3a860" stroke-width="4.06" stroke-linecap="round"/><circle cx="197" cy="182" r="12.075" fill="#f3a860"/><path d="M275 195L308 222" fill="none" stroke="#f3a860" stroke-width="4.06" stroke-linecap="round"/><circle cx="308" cy="222" r="12.075" fill="#f3a860"/><path d="M195 245L148 230" fill="none" stroke="#f3a860" stroke-width="4.06" stroke-linecap="round"/><circle cx="148" cy="230" r="12.075" fill="#f3a860"/><path d="M255 210L240 253" fill="none" stroke="#f3a860" stroke-width="4.06" stroke-linecap="round"/><circle cx="240" cy="253" r="12.075" fill="#f3a860"/><path d="M135 300L98 297" fill="none" stroke="#f3a860" stroke-width="4.06" stroke-linecap="round"/><circle cx="98" cy="297" r="12.075" fill="#f3a860"/><path d="M200 245L192 295" fill="none" stroke="#f3a860" stroke-width="4.06" stroke-linecap="round"/><circle cx="192" cy="295" r="12.075" fill="#f3a860"/><path d="M165 280L152 325" fill="none" stroke="#f3a860" stroke-width="4.06" stroke-linecap="round"/><circle cx="152" cy="325" r="12.075" fill="#f3a860"/><path d="M120 320L107 337" fill="none" stroke="#f3a860" stroke-width="4.06" stroke-linecap="round"/><circle cx="107" cy="337" r="12.075" fill="#f3a860"/><path d="M510 195L450 255" fill="none" stroke="#f2c4d6" stroke-width="3.77" stroke-linecap="round"/><g transform="translate(410 332) rotate(38)" fill="#de3f98"><ellipse cx="0" cy="0" rx="108" ry="84"/><circle cx="99.3" cy="11.6" r="22.9"/><circle cx="81.6" cy="45.6" r="22.9"/><circle cx="45.8" cy="69.5" r="22.9"/><circle cx="0.0" cy="78.1" r="22.9"/><circle cx="-45.8" cy="69.5" r="22.9"/><circle cx="-81.6" cy="45.6" r="22.9"/><circle cx="-99.3" cy="11.6" r="22.9"/></g><g transform="translate(426 318) rotate(38)" fill="#e5506a"><ellipse cx="0" cy="0" rx="88" ry="66"/><circle cx="80.4" cy="11.5" r="21.6"/><circle cx="60.3" cy="41.5" r="21.6"/><circle cx="22.3" cy="59.1" r="21.6"/><circle cx="-22.3" cy="59.1" r="21.6"/><circle cx="-60.3" cy="41.5" r="21.6"/><circle cx="-80.4" cy="11.5" r="21.6"/></g><g transform="translate(442 298) rotate(38)" fill="#ee86ae"><ellipse cx="0" cy="0" rx="60" ry="44"/><circle cx="54.1" cy="9.9" r="17.5"/><circle cx="34.4" cy="32.2" r="17.5"/><circle cx="0.0" cy="40.9" r="17.5"/><circle cx="-34.4" cy="32.2" r="17.5"/><circle cx="-54.1" cy="9.9" r="17.5"/></g><g transform="translate(454 284) rotate(38)" fill="#f4b4d0"><ellipse cx="0" cy="0" rx="40" ry="28"/><circle cx="35.2" cy="8.4" r="14.5"/><circle cx="15.0" cy="23.8" r="14.5"/><circle cx="-15.0" cy="23.8" r="14.5"/><circle cx="-35.2" cy="8.4" r="14.5"/></g><path d="M300 240Q380 215 470 260L470 300L300 280Z" fill="#e5506a" opacity="0"/><path d="M280 50Q285 90 296 122M430 50Q435 140 470 190" fill="none" stroke="#468c36" stroke-width="4.06" stroke-linecap="round"/><path d="M262 26h30l-8 26z" fill="#1f7a3a"/><path d="M412 26h30l-6 30z" fill="#1f7a3a"/><path d="M482.0 30.0Q431.0 89.8 450.0 166.0Q501.0 106.2 482.0 30.0Z" fill="#3ba856"/><path d="M562.0 45.0Q546.0 124.9 606.0 180.0Q622.0 100.1 562.0 45.0Z" fill="#3ba856"/><path d="M520 30Q512 130 555 180" fill="none" stroke="#e0708f" stroke-width="3.77" stroke-linecap="round"/><path d="M357 45Q355 120 375 170" fill="none" stroke="#f3a860" stroke-width="3.48" stroke-linecap="round"/><path d="M343 26h34l-17 20z" fill="#e5506a"/><path d="M600 180Q582 280 558 365" fill="none" stroke="#6aab38" stroke-width="4.06" stroke-linecap="round"/><path d="M580 240L538 262" fill="none" stroke="#6aab38" stroke-width="4.06" stroke-linecap="round"/><circle cx="538" cy="262" r="12.65" fill="#6aab38"/><path d="M598 205L630 268" fill="none" stroke="#6aab38" stroke-width="4.06" stroke-linecap="round"/><circle cx="630" cy="268" r="12.65" fill="#6aab38"/><path d="M572 300L528 333" fill="none" stroke="#6aab38" stroke-width="4.06" stroke-linecap="round"/><circle cx="528" cy="333" r="12.65" fill="#6aab38"/><path d="M580 275L607 322" fill="none" stroke="#6aab38" stroke-width="4.06" stroke-linecap="round"/><circle cx="607" cy="322" r="12.65" fill="#6aab38"/><path d="M565 335L558 365" fill="none" stroke="#6aab38" stroke-width="4.06" stroke-linecap="round"/><circle cx="558" cy="365" r="12.65" fill="#6aab38"/><path d="M570 318L583 352" fill="none" stroke="#6aab38" stroke-width="4.06" stroke-linecap="round"/><circle cx="583" cy="352" r="12.65" fill="#6aab38"/></g><g transform="translate(38.80 66.50) scale(0.16044)"><path d="M283 35Q340 200 445 345" fill="none" stroke="#f3a860" stroke-width="3.77" stroke-linecap="round"/><path d="M292 62L337 77" fill="none" stroke="#f3a860" stroke-width="3.77" stroke-linecap="round"/><circle cx="337" cy="77" r="12.65" fill="#f3a860"/><path d="M296 85L295 157" fill="none" stroke="#f3a860" stroke-width="3.77" stroke-linecap="round"/><circle cx="295" cy="157" r="12.65" fill="#f3a860"/><path d="M322 132L372 175" fill="none" stroke="#f3a860" stroke-width="3.77" stroke-linecap="round"/><circle cx="372" cy="175" r="12.65" fill="#f3a860"/><path d="M335 170L320 245" fill="none" stroke="#f3a860" stroke-width="3.77" stroke-linecap="round"/><circle cx="320" cy="245" r="12.65" fill="#f3a860"/><path d="M362 212L413 238" fill="none" stroke="#f3a860" stroke-width="3.77" stroke-linecap="round"/><circle cx="413" cy="238" r="12.65" fill="#f3a860"/><path d="M410 290L445 290" fill="none" stroke="#f3a860" stroke-width="3.77" stroke-linecap="round"/><circle cx="445" cy="290" r="12.65" fill="#f3a860"/><path d="M378 255L367 310" fill="none" stroke="#f3a860" stroke-width="3.77" stroke-linecap="round"/><circle cx="367" cy="310" r="12.65" fill="#f3a860"/><path d="M425 320L430 375" fill="none" stroke="#f3a860" stroke-width="3.77" stroke-linecap="round"/><circle cx="430" cy="375" r="12.65" fill="#f3a860"/><path d="M435 335L458 357" fill="none" stroke="#f3a860" stroke-width="3.77" stroke-linecap="round"/><circle cx="458" cy="357" r="12.65" fill="#f3a860"/></g></g></defs><use href="#flora"/><use href="#flora" transform="rotate(180 223.2 168.15)"/></svg><div class="stitle">基于英语核心素养的阅读教学</div><div class="ssub" style="top:192.500px">敖娜仁图雅</div><div class="ssub" style="top:216.500px">首都师范大学教师教育学院</div></div>
<svg class="abs" style="left:641.300px;top:302.500px" width="9" height="12" viewBox="0 0 9 12"><path d="M.6.600v8.400l1.900-1.700 1.500 3.100 1.300-.6-1.500-3 2.800-.1z" fill="#fbfbfb" stroke="#2a2a2a" stroke-width=".7" stroke-linejoin="round"/></svg>
</div>
<div id="side">
  <div class="bigcard">
    <div class="bav" style="top:28.500px"><svg width="39" height="39" viewBox="0 0 39 39"><defs><filter id="b1"><feGaussianBlur stdDeviation=".8"/></filter></defs><rect width="39" height="39" fill="#f0ecec"/><g filter="url(#b1)"><path d="M-2 16C-2 2 6 -2 14 0c8 1.500 12 8 11.500 17 0 3-1 4.500-2.500 4.500L20 9 2 8-2 20z" fill="#35221e"/><ellipse cx="10.500" cy="18.500" rx="11" ry="12.500" fill="#f4d3c2"/><path d="M-1 8c5-4 15-4 21 2l1 7C16 9 6 8-1 12z" fill="#35221e"/><ellipse cx="10" cy="25.500" rx="3.800" ry="3.600" fill="#b12f3a"/><rect x="7.200" y="22.600" width="5.600" height="1.400" fill="#fff"/><ellipse cx="10" cy="27.500" rx="2" ry="1.200" fill="#e0707a"/><ellipse cx="5.200" cy="15.800" rx="1.600" ry=".8" fill="#4a3530"/><ellipse cx="14.800" cy="15.800" rx="1.600" ry=".8" fill="#4a3530"/><path d="M-1 33c6-3 18-5 25-4l6 5-2 7H-1z" fill="#bfe4ee"/><path d="M4 32v8M9 31v9M14 30v10M19 30v10M24 30v10" stroke="#eaf6fa" stroke-width="1.200"/></g></svg></div>
    <div class="bnm" style="top:76px">陈丽虹</div><svg class="mic" style="top:77px" viewBox="0 0 10 13"><rect x="3.300" y=".8" width="3.400" height="7" rx="1.700" fill="#8f8f8f"/><path d="M1.700 5.800c0 2.200 1.400 3.500 3.300 3.500s3.300-1.300 3.300-3.500" fill="none" stroke="#8f8f8f" stroke-width=".8"/><rect x="4.600" y="9.300" width=".8" height="1.800" fill="#8f8f8f"/><rect x="3" y="11" width="4" height=".8" fill="#8f8f8f"/></svg>
    <div class="bav" style="top:125.500px"><svg width="39" height="39" viewBox="0 0 39 39"><defs><filter id="b2"><feGaussianBlur stdDeviation=".6"/></filter></defs><rect width="39" height="39" fill="#fefefe"/><g filter="url(#b2)"><path d="M19.500 3c-6 0-9 5-9.500 11-.5 7 .5 14-2 21l5 4h13l5-4c-2.500-7-1.500-14-2-21-.5-6-3.500-11-9.500-11z" fill="#2a1a18"/><path d="M10 39c1-7 5-11 9.500-11S28 32 29 39z" fill="#f2f2f4"/><ellipse cx="19.500" cy="17.500" rx="5.800" ry="7.500" fill="#f6d9cb"/><rect x="17.500" y="24" width="4" height="4" fill="#f0cdbd"/><ellipse cx="19.500" cy="21.500" rx="2" ry=".9" fill="#d9707a"/><path d="M14 12c2-4 9-4 11 0l-1 2c-2-3-7-3-9 0z" fill="#2a1a18"/></g></svg></div>
    <div class="bnm" style="top:172px">敖娜仁图雅</div><svg class="mic" style="top:173px" viewBox="0 0 10 13"><rect x="3.300" y=".8" width="3.400" height="7" rx="1.700" fill="#8f8f8f"/><path d="M1.700 5.800c0 2.200 1.400 3.500 3.300 3.500s3.300-1.300 3.300-3.500" fill="none" stroke="#8f8f8f" stroke-width=".8"/><rect x="4.600" y="9.300" width=".8" height="1.800" fill="#8f8f8f"/><rect x="3" y="11" width="4" height=".8" fill="#8f8f8f"/></svg>
  </div>
  <div class="card" style="left:0px;top:203px"><div class="av"><svg width="34" height="33" viewBox="0 0 34 33"><defs><linearGradient id="g1" x1="0" y1="0" x2="1" y2="1"><stop offset="0" stop-color="#b9a23a"/><stop offset=".35" stop-color="#e9df97"/><stop offset=".6" stop-color="#d8cc8a"/><stop offset="1" stop-color="#5f6a38"/></linearGradient><filter id="b3"><feGaussianBlur stdDeviation="1"/></filter></defs><rect width="34" height="33" fill="url(#g1)"/><g filter="url(#b3)"><ellipse cx="25" cy="10" rx="6" ry="7" fill="#ecd3a8"/><path d="M19 4c5-4 12-2 13 5l-3-2-8 0z" fill="#b08a45"/><ellipse cx="22" cy="22" rx="8" ry="6" fill="#e9e2c4"/><rect x="0" y="12" width="10" height="14" fill="#a89a3c" opacity=".6"/></g></svg><div class="sh"></div><div class="nm">黄以萍</div></div></div><div class="card" style="left:50px;top:203px"><div class="av"><svg width="34" height="33" viewBox="0 0 34 33"><rect width="34" height="33" fill="#fff"/><text x="17" y="13.500" text-anchor="middle" font-family="Liberation Sans,Noto Sans CJK SC,sans-serif" font-size="9.500" fill="#111">李建龙</text></svg><div class="sh"></div><div class="nm">李建龙</div></div></div><div class="card" style="left:0px;top:253px"><div class="av"><svg width="34" height="33" viewBox="0 0 34 33"><rect width="34" height="33" fill="#fff"/><path d="M12 5.500l-1-4 2.200 1.800L15 .8l1.800 2.500L19 1.500l-1 4z" fill="#f2c927"/><path d="M27 3.500l1 2.500 2.500 1-2.500 1-1 2.500-1-2.500-2.500-1 2.500-1zM30.500 9.500l.7 1.600 1.600.7-1.600.7-.7 1.600-.7-1.600-1.600-.7 1.600-.7z" fill="#f2d21f"/><text x="15" y="9.500" text-anchor="middle" font-family="Liberation Sans,Noto Sans CJK SC,sans-serif" font-size="3" fill="#333">周宝宝</text><text x="1" y="25" font-family="Liberation Serif,serif" font-style="italic" font-size="12.500" fill="#3a9bd3">Sophia</text></svg><div class="sh"></div><div class="nm">周宝宝</div></div></div><div class="card" style="left:50px;top:253px"><div class="av"><svg width="34" height="33" viewBox="0 0 34 33"><defs><filter id="b4"><feGaussianBlur stdDeviation=".5"/></filter></defs><rect width="34" height="33" fill="#fbf6f6"/><g filter="url(#b4)"><circle cx="5" cy="7" r="7.500" fill="#d5424c"/><circle cx="29.500" cy="7" r="7.500" fill="#d5424c"/><circle cx="17" cy="20" r="13.500" fill="#cf4a55"/><circle cx="17" cy="21" r="11" fill="#f2d7d2"/><path d="M6 18c3-8 19-8 22 0-5-3-17-3-22 0z" fill="#e9b9b2"/><ellipse cx="12.500" cy="19" rx="1.800" ry="1.300" fill="#9a6a6a"/><ellipse cx="21.500" cy="19" rx="1.800" ry="1.300" fill="#9a6a6a"/></g></svg><div class="sh"></div><div class="nm">罗祉然</div></div></div><div class="card" style="left:0px;top:303px"><div class="av"><svg width="34" height="33" viewBox="0 0 34 33"><defs><filter id="b5"><feGaussianBlur stdDeviation=".9"/></filter></defs><rect width="34" height="33" fill="#8a7a44"/><g filter="url(#b5)"><rect x="0" y="0" width="34" height="8" fill="#9c8a52"/><rect x="20" y="4" width="14" height="12" fill="#6f7a3a"/><ellipse cx="22" cy="20" rx="13" ry="10" fill="#cfcbc0"/><ellipse cx="16" cy="9.500" rx="6" ry="4" fill="#d8d5cc"/><ellipse cx="17" cy="16" rx="6" ry="6.500" fill="#1c1c22"/><ellipse cx="8.500" cy="12" rx="3.500" ry="1.800" fill="#22222a"/><ellipse cx="25" cy="14" rx="3.500" ry="1.800" fill="#22222a"/><rect x="0" y="24" width="14" height="9" fill="#5b5332"/></g></svg><div class="sh"></div><div class="nm">杨开花</div></div></div><div class="card" style="left:50px;top:303px"><div class="av"><svg width="34" height="33" viewBox="0 0 34 33"><defs><filter id="b6"><feGaussianBlur stdDeviation=".5"/></filter></defs><rect width="34" height="33" fill="#dfe6f6"/><g filter="url(#b6)"><path d="M0 26C-1 8 6 0 17 0s18 8 17 26l-4-3-26 0z" fill="#a8653c"/><path d="M5 16c0-7 5-9 12-9s12 2 12 9c0 8-5 13-12 13S5 24 5 16z" fill="#f7e1cf"/><path d="M3 14L9 2l4 9 3-9 4 9 4-9 6 12-4-4-5 3-4-3-5 3z" fill="#b26d40"/><ellipse cx="12" cy="14.500" rx="2.300" ry="2.800" fill="#3b3a1c"/><ellipse cx="23" cy="14.500" rx="2.300" ry="2.800" fill="#3b3a1c"/><circle cx="12" cy="14.300" r="1.100" fill="#d8e04a"/><circle cx="23" cy="14.300" r="1.100" fill="#d8e04a"/><path d="M29 5l.6 1.500 1.500.6-1.500.6-.6 1.500-.6-1.500-1.500-.6 1.500-.6z" fill="#f2e04a"/><rect x="8" y="28" width="18" height="5" fill="#3c3a4a"/></g></svg><div class="sh"></div><div class="nm">蔡琪满</div></div></div><div class="card" style="left:0px;top:353px"><div class="av"><svg width="34" height="33" viewBox="0 0 34 33"><defs><filter id="b7"><feGaussianBlur stdDeviation=".5"/></filter></defs><rect width="34" height="33" fill="#fdfdfd"/><g filter="url(#b7)"><path d="M5 33C3 14 8 5 18 5s14 9 11 28z" fill="#4d3f36"/><ellipse cx="17.500" cy="18.500" rx="10" ry="9.500" fill="#f6e9dc"/><path d="M8 14c3-6 16-6 19 0-6-2-13-2-19 0z" fill="#4d3f36"/><circle cx="13" cy="18" r="1" fill="#3a2c28"/><circle cx="22" cy="18" r="1" fill="#3a2c28"/><path d="M18 5c0-2 2-3.500 4-3-0 2-2 3-4 3zM18 5c-1-1.500-3-2-4-1 1 1.500 2.500 1.500 4 1z" fill="#6d9a72"/><rect x="9" y="29" width="17" height="4" fill="#7a8a4a"/></g></svg><div class="sh"></div><div class="nm">莫丽坤</div></div></div><div class="card" style="left:50px;top:353px"><div class="av"><svg width="34" height="33" viewBox="0 0 34 33"><defs><filter id="b8"><feGaussianBlur stdDeviation=".7"/></filter></defs><rect width="34" height="33" fill="#eef0f0"/><g filter="url(#b8)"><path d="M5 13C4 4 10 1 18 1.500 27 2 32 6 31 14l-5-3-12-1-5 5z" fill="#5b5d62"/><path d="M10 12c4-2 12-2 17 1 0 8-3 13-9 13-5 0-8-6-8-14z" fill="#efe0d6"/><path d="M12 19c3-2 9-2 12 0v6c-3 2-9 2-12 0z" fill="#e8ece8"/><ellipse cx="11" cy="15" rx="1.500" ry="2.500" fill="#e0b9a4"/><circle cx="28" cy="27" r="5" fill="#7d1418"/></g></svg><div class="sh"></div><div class="nm">朱焯贤</div></div></div><div class="card" style="left:0px;top:403px"><div class="av"><svg width="34" height="33" viewBox="0 0 34 33"><defs><filter id="b9"><feGaussianBlur stdDeviation=".6"/></filter></defs><rect width="34" height="33" fill="#3a3550"/><g filter="url(#b9)"><rect x="0" y="0" width="13" height="17" fill="#4a4468"/><rect x="14" y="0" width="12" height="18" fill="#6f8fa8"/><rect x="26" y="0" width="8" height="16" fill="#5a3a48"/><rect x="27" y="2" width="2" height="12" fill="#a63a3a"/><ellipse cx="14" cy="14" rx="3.500" ry="4" fill="#b98468"/><path d="M10 12c1-4 7-4 8 0z" fill="#8a3a2a"/><ellipse cx="22" cy="8" rx="3" ry="5" fill="#9fb4c4"/><rect x="0" y="17" width="34" height="4" fill="#6a5a52"/><path d="M2 3h9M2 6h8M2 9h9M2 12h6" stroke="#8a86b0" stroke-width=".8"/><rect x="22" y="14" width="10" height="4" fill="#7a6a50"/></g></svg><div class="sh"></div><div class="nm">张梓琳</div></div></div><div class="card" style="left:50px;top:403px"><div class="av"><svg width="34" height="33" viewBox="0 0 34 33"><defs><filter id="b10"><feGaussianBlur stdDeviation=".8"/></filter></defs><rect width="34" height="33" fill="#aab5d6"/><g filter="url(#b10)"><path d="M2 22C2 8 8 2 14 3c4 1 5 6 4 12l-4 9-8 2z" fill="#5f5f70"/><path d="M12 4c6-3 14 0 15 8l-8 3z" fill="#e9e9f2"/><ellipse cx="23" cy="13" rx="5" ry="6" fill="#e4c9c4"/><path d="M17 9c3-5 10-4 12 2l-5-1-4 5z" fill="#8a6a6a"/><rect x="19" y="14" width="1.500" height="3" fill="#3a3a44"/><path d="M14 24c3-5 14-5 18 0v9H14z" fill="#c9cde0"/></g></svg><div class="sh"></div><div class="nm">曾爱敏</div></div></div><div class="card" style="left:0px;top:453px"><div class="av"><svg width="34" height="33" viewBox="0 0 34 33"><defs><filter id="b11"><feGaussianBlur stdDeviation=".6"/></filter></defs><rect width="34" height="33" fill="#cdbfa8"/><g filter="url(#b11)"><rect x="10" y="1" width="13" height="10" fill="#e8d9c9"/><rect x="11" y="2" width="3" height="3" fill="#d84a8a"/><rect x="15" y="1.500" width="3" height="3" fill="#4a7ad8"/><rect x="18.500" y="2" width="3" height="3" fill="#e8c83a"/><rect x="12" y="6" width="3" height="3" fill="#4aa85a"/><rect x="16" y="5.500" width="3" height="3" fill="#d8483a"/><rect x="19.500" y="6" width="2.500" height="3" fill="#7a4ad8"/></g></svg><div class="sh"></div><div class="nm"></div></div></div><div class="card" style="left:50px;top:453px"><div class="av"><svg width="34" height="33" viewBox="0 0 34 33"><rect width="34" height="33" fill="#fdfdfd"/><path d="M10 10c3-2 6-2 9 0" stroke="#333" stroke-width=".8" fill="none"/></svg><div class="sh"></div><div class="nm"></div></div></div>
</div>
<div class="abs" style="left:1033.800px;top:536.500px;width:1.200px;height:21px;background:#c4232d"></div>
<div id="bottom">
  <div class="btn" style="left:21px;background:#e6e6e6"><svg width="28" height="28" viewBox="0 0 28 28"><g fill="#2b2b2b"><circle cx="16.8" cy="11.8" r="2.3"/><path d="M12.5 18.5c.3-2.6 2-3.6 4.3-3.6s4 1 4.3 3.6z"/><circle cx="11.6" cy="11.2" r="2.7" stroke="#e6e6e6" stroke-width=".6"/><path d="M6.3 18.5c.3-3 2.4-4.2 5.3-4.2s5 1.200 5.300 4.200z" stroke="#e6e6e6" stroke-width=".6"/></g></svg></div>
  <div class="lbl" style="left:6px">管理参与人</div>
  <div class="btn" style="left:435.500px"><svg width="28" height="28" viewBox="0 0 28 28"><rect x="8" y="9" width="12.4" height="8.600" rx=".6" fill="#e8e8e8"/><rect x="13.7" y="17.6" width="1" height="2.2" fill="#e8e8e8"/><rect x="10.5" y="19.6" width="7.400" height=".9" fill="#e8e8e8"/><path d="M10.8 15.2c.6-2.200 2.200-3 4.300-3v-1.500l3 2.500-3 2.500v-1.500c-1.800 0-3.200.2-4.300 1z" fill="#2e2e2e"/></svg></div>
  <div class="lbl" style="left:419.500px">屏幕演示</div>
  <div class="btn" style="left:475.400px"><svg width="28" height="28" viewBox="0 0 28 28"><path d="M8.200 8.800h4.600l1.200 1.400h6v8.600h-11.800z" fill="#e8e8e8"/><path d="M10.800 16.400c.6-2.200 2.200-3 4.300-3v-1.500l3 2.500-3 2.500v-1.500c-1.800 0-3.200.2-4.300 1z" fill="#2e2e2e"/></svg></div>
  <div class="lbl" style="left:459.400px">文档演示</div>
  <div class="btn" style="left:515.300px"><svg width="28" height="28" viewBox="0 0 28 28"><rect x="11.8" y="7.200" width="4.400" height="9" rx="2.200" fill="#e8e8e8"/><path d="M10 13.600c0 2.600 1.700 4.300 4 4.300s4-1.700 4-4.300" fill="none" stroke="#e8e8e8" stroke-width=".9"/><rect x="13.550" y="17.8" width=".9" height="2" fill="#e8e8e8"/><rect x="11.400" y="19.700" width="5.200" height=".9" fill="#e8e8e8"/></svg></div>
  <div class="lbl" style="left:499.300px">静音</div>
  <div class="btn" style="left:555.100px"><svg width="28" height="28" viewBox="0 0 28 28"><rect x="7.500" y="10" width="9.400" height="8" rx="1" fill="#e8e8e8"/><path d="M17.400 13.200l3.600-2.400v6.400l-3.600-2.400z" fill="#e8e8e8"/><path d="M8.600 7.400l9.800 13" stroke="#c8202c" stroke-width="1.100" fill="none"/></svg></div>
  <div class="lbl" style="left:538.300px">打开摄像头</div>
  <div class="btn" style="left:595px;background:rgba(255,255,255,.1)"><svg width="28" height="28" viewBox="0 0 28 28"><g fill="#e0e0e0"><rect x="9" y="9.700" width="10" height="1.100"/><rect x="9" y="13.450" width="10" height="1.100"/><rect x="9" y="17.200" width="10" height="1.100"/></g></svg></div>
  <div class="lbl" style="left:578.800px">更多</div>
  <div class="btn" style="left:1005px;background:#f0424e"><svg width="28" height="28" viewBox="0 0 28 28"><path d="M10.800 10.300a5 5 0 1 0 6.400 0" fill="none" stroke="#fff" stroke-width="1.200" stroke-linecap="round"/><path d="M14 7.800v5.600" stroke="#fff" stroke-width="1.200" stroke-linecap="round"/></svg></div>
  <div class="lbl" style="left:989px">结束</div>
</div>
<svg class="abs" style="left:975px;top:0" width="60" height="20" viewBox="0 0 60 20"><g fill="none" stroke="#d2d2d2" stroke-width="1"><path d="M9.600 4.500h4l.5 5 1.700 2.200h-8.400l1.700-2.200z"/><path d="M11.600 11.700v3.500"/><path d="M27.700 9h9"/><path d="M50.500 5.500h9.500v6M48 8h9v6.500h-9z"/></g></svg>
<div class="abs" style="left:934px;top:36px;font-size:11.500px;line-height:16px;color:#dcdcdc;white-space:nowrap">敖娜仁图雅博士...</div>
<svg class="abs" style="left:1027px;top:38px" width="9" height="12" viewBox="0 0 9 12"><g fill="#9a9a9a"><rect x="2" y="2" width="7" height="1"/><rect x="2" y="5.500" width="7" height="1"/><rect x="2" y="9" width="7" height="1"/></g></svg>
</body>
</html>
